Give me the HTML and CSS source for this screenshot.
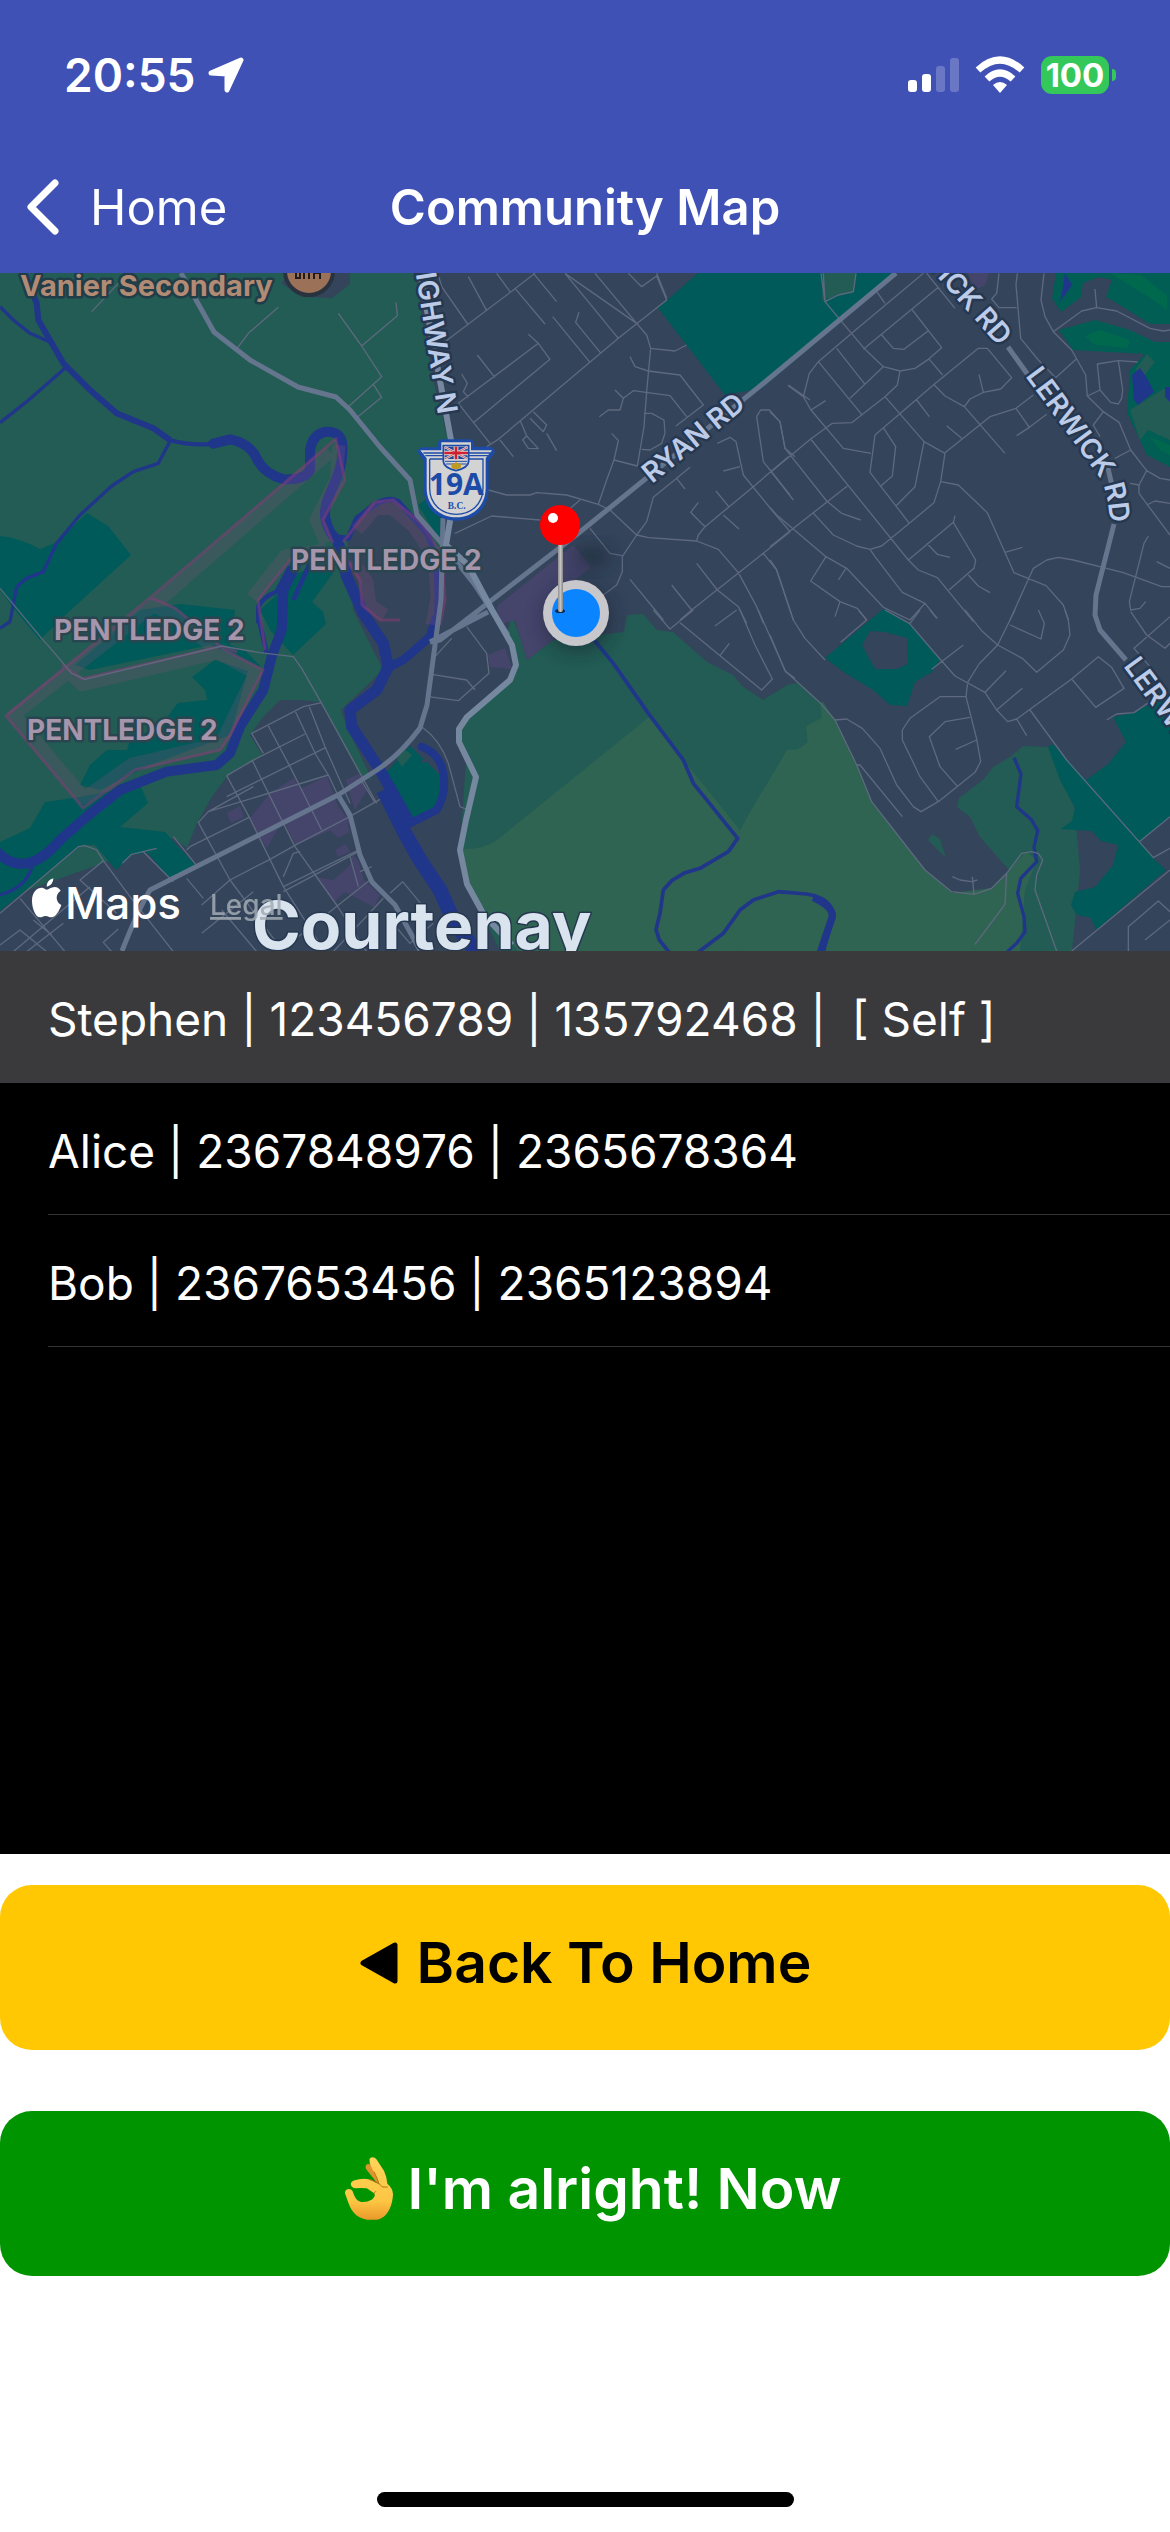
FILE: index.html
```html
<!DOCTYPE html>
<html lang="en">
<head>
<meta charset="utf-8">
<meta name="viewport" content="width=device-width, initial-scale=1">
<title>Community Map</title>
<link rel="stylesheet" href="styles.css">
</head>
<body>
<header class="header">
  <div class="status">
    <div class="status-group">
      <span class="time">20:55</span>
      <svg class="arrow" viewBox="0 0 36 36" aria-hidden="true"><path d="M33 3 L19 33 L19 17 L3 16 Z" fill="#fff" stroke="#fff" stroke-width="5" stroke-linejoin="round"/></svg>
    </div>
    <div class="status-group">
      <svg class="signal" viewBox="0 0 51 36" aria-hidden="true"><g fill="#fff"><rect x="0" y="23" width="9" height="12" rx="3"/><rect x="14" y="17" width="9" height="18" rx="3"/><g opacity=".22"><rect x="28" y="9" width="9" height="26" rx="3"/><rect x="42" y="1" width="9" height="34" rx="3"/></g></g></svg>
      <svg class="wifi" viewBox="0 0 50 38" aria-hidden="true"><g fill="none" stroke="#fff" stroke-width="7"><path d="M3 14 Q25 -6 47 14"/><path d="M12 23 Q25 11 38 23"/></g><path d="M18 29 Q25 23 32 29 L25 37 Z" fill="#fff"/></svg>
      <div class="battery-wrap"><span class="battery">100</span><span class="battery-tip"></span></div>
    </div>
  </div>
  <nav class="nav">
    <a class="back" href="#home"><svg class="chevron" viewBox="0 0 34 60" aria-hidden="true"><path d="M29 6 L5 30 L29 54" fill="none" stroke="#fff" stroke-width="7" stroke-linecap="round" stroke-linejoin="round"/></svg>Home</a>
    <h1 class="title">Community Map</h1>
  </nav>
</header>

<main class="content">
<svg class="map" viewBox="0 273 1170 678" role="img" aria-label="Map of Courtenay">
  <defs>
    <path id="hw" d="M391 120 L420 300 L438 415"/>
    <path id="ryan" d="M652 484 L757 398"/>
    <path id="ler1" d="M880 212 L999 347"/>
    <path id="ler2" d="M1025 376 L1098 475 Q1109 490 1111 535"/>
    <path id="ler3" d="M1123 666 L1210 785"/>
    <filter id="soft" x="-50%" y="-50%" width="200%" height="200%"><feGaussianBlur stdDeviation="9"/></filter>
    <linearGradient id="stick"><stop offset="0" stop-color="#8e8e8e"/><stop offset=".5" stop-color="#c4c4c4"/><stop offset="1" stop-color="#858585"/></linearGradient>
  </defs>
  <rect y="273" width="1170" height="678" fill="#34445b"/>

  <!-- open land -->
  <path class="land" d="M0 273H415L424 330 433 380 448 440 445 480 423 490 450 545 430 560 353 610 383 670 341 710 347 727 372 780 360 775 321 702 300 700 280 700 263 717 250 735 262 755 230 773 213 795 197 823 187 848 173 838 0 900Z"/>
  <path class="land" d="M553 640L624 632 627 615 643 614 657 630 673 632 690 647 707 662 733 675 743 687 763 700 787 685 797 683 820 703 835 720 857 765 872 802 925 870 952 893 974 894 992 888 1009 870 980 837 970 817 957 807 959 798 983 780 993 767 1010 757 1023 746 1048 747 1072 780 1080 870 1072 951H500L470 890 460 850 466 760 458 728 463 718 512 680 516 665 508 630 512 615 521 640 527 660Z"/>
  <path class="meadow" d="M463 849Q485 849 497 840L649 717 665 735 740 830 752 815 787 750 806 705 823 702 835 720 857 765 872 802 925 870 952 893 974 894 992 888 1009 870 1026 852 1037 860 1025 890 1020 951H518L470 890Z"/>
  <path class="land" d="M740 830Q760 810 785 750L808 749 806 726 822 718 820 703 790 684 763 700 710 665 649 717Z"/>
  <path class="meadow" d="M740 830 738 951H1010L1010 870 992 888 952 893 925 870 872 802 835 720 822 705V722L806 727 809 741 797 750H787L750 812Z"/>
  <path class="land" d="M928 840 932 834 940 839 946 858Z"/>

  <!-- woodland -->
  <path class="wood" d="M0 536Q20 538 40 549L55 543 87 513 108 526 131 555 60 620 40 640 15 610 0 590ZM281 591Q300 560 333 573L312 602 323 612 326 624 293 655 270 630 260 610ZM140 610 75 665 90 670 210 645 262 668 245 650 230 645 235 610 180 604ZM80 785 90 765 107 750 127 750 130 740 160 726 178 703 207 700 205 690 192 677 215 660 248 671 230 735 150 765 100 790ZM0 842 30 828 45 802 80 797 140 785 148 803 120 827 165 832 197 867 172 882 148 853 132 855 116 870 95 845 82 845 0 911ZM382 777 410 746 428 763 440 775V805L412 822Z"/>
  <path class="wood" d="M658 308 698 273H895L833 328 762 388 725 395ZM418 505 425 500 444 520 440 540ZM825 658 883 609 908 622 940 660 932 672 915 682 907 706 890 705 873 690 845 673ZM1048 747 1053 744 1086 780 1139 840 1155 860 1166 870 1096 930 1091 918 1077 915 1071 905 1075 892 1095 887 1113 865 1118 845 1101 841 1092 831 1061 829 1072 821 1075 808 1060 780ZM1113 717 1133 713 1150 704 1170 695V817L1139 842 1086 780 1108 764 1126 742Z"/>
  <path class="fairway" d="M1056 273H1170V324L1150 324 1120 305 1106 297 1112 280 1099 277 1083 283 1081 297 1061 312 1052 298ZM1059 330 1095 320 1130 330 1155 342 1170 342V467L1147 455 1127 413 1130 370 1145 354 1073 350Z"/>
  <path fill="#00684d" d="M1110 273 1150 298 1167 310V295L1140 275ZM1085 336 1100 330 1130 340 1128 348 1095 345ZM1150 437 1160 450 1170 455V445Z"/>
  <path class="land" d="M822 301 823 273H856L853 293 838 295ZM1130 410 1165 388H1170V440L1148 430 1140 440ZM1147 354 1155 362 1145 375 1135 370ZM397 759 403 748 412 755 402 767Z"/>
  <path fill="#34445b" d="M862 645 870 631 885 632 907 638 908 664 897 669H875ZM347 535 353 520 372 502 393 500 420 523 440 557V620L423 643 390 670 385 670 385 650 353 610ZM421 762 426 755 432 758 424 763ZM281 283 302 297 332 298 350 284V273H290Z"/>
  <path class="shops" d="M497 606 573 545 591 567 575 580 580 610 553 640 527 660 515 620 497 625ZM488 655 505 648 512 669 490 667ZM270 793 294 778 300 789 327 776 338 806 350 822 296 845 283 820 267 848 258 835 250 818ZM346 780 360 773 367 790 355 810 350 795ZM227 813 240 806 244 817 231 823ZM330 830 347 822 350 832 338 838ZM335 850 346 844 350 852 338 857ZM315 877 333 880 350 865 352 855 358 860 364 880 380 895 374 907 345 892 334 902ZM968 273H989L985 285 975 290Z"/>

  <!-- rivers and creeks -->
  <g class="water" transform="translate(0 270) scale(.33333)">
    <path stroke-width="18" d="M70 0 110 100 115 150 190 280 270 360 350 430 460 475 510 510"/>
    <path stroke-width="13" d="M510 510Q560 525 620 523L690 510"/>
    <path stroke-width="30" stroke-linecap="round" d="M640 521 690 508Q750 520 770 565T850 628Q915 630 930 600V540Q940 485 985 485T1027 540C1030 620 970 680 975 740Q985 790 1010 808"/>
    <path stroke-width="16" d="M1000 800 1045 805 1070 745 1130 700Q1170 680 1195 695L1280 790Q1320 860 1310 1050"/>
    <path stroke-width="34" d="M1010 800 1040 920 1090 1030 1150 1120 1165 1190 1130 1260 1050 1320 1055 1370 1140 1500 1230 1660"/>
    <path stroke-width="26" d="M1150 1200 1210 1170 1290 1100 1310 1040"/>
    <path stroke-width="14" d="M880 990 930 880 990 850M775 1060V1010Q790 980 830 965L870 890M775 1040 800 1150"/>
    <path stroke-width="30" d="M890 880 850 960 845 1080 815 1160 790 1260 720 1370 690 1450 650 1485 500 1505 360 1560 260 1640 180 1710Q130 1770 80 1780T-20 1735"/>
    <path stroke-width="10" d="M0 110 40 150 90 190 155 218M200 290 80 395 0 458M512 510 475 580 400 605 335 648 240 735 170 820 130 905 80 925 50 950 30 1055 0 1075M100 1770Q90 1850 0 1875"/>
  </g>
  <g class="water" transform="translate(390 610) scale(.33333)">
    <path stroke-width="44" d="M-20 540 50 680 90 750 150 840 190 930 260 1030"/>
    <path stroke-width="24" stroke-linecap="round" d="M95 410Q150 430 160 490T140 600L50 645"/>
    <path stroke-width="11" d="M600 75 670 160 775 310 880 450 910 520 1043 685 1015 725 930 775 885 788 845 812 820 840 810 910 798 958 808 990 840 1030M920 1030 1000 970 1050 900 1090 870 1165 845 1250 852Q1330 865 1328 920L1300 1025"/>
  </g>
  <g class="water" transform="translate(770 610) scale(.33333)">
    <path stroke-width="22" d="M130 862Q190 890 187 920L150 1030"/>
    <path stroke-width="10" d="M732 443 753 492 740 590 785 630 803 662 792 712 800 755 752 805 743 850 762 920 765 965 740 1000 712 1025"/>
  </g>
  <path fill="#20368a" d="M1065 273 1072 285 1060 302 1063 287ZM1132 375 1140 368 1147 378 1154 392 1138 405 1134 400ZM1165 387H1170V402L1165 397Z"/>

  <!-- reserve boundaries -->
  <g class="reserve-band">
    <path d="M330 452 153 606 14 715 84 798 132 764 218 744 225 735 255 673 222 655 172 614 148 604M66 670 82 685 222 652M339 445 336 480 316 520 326 543M326 550 285 556 252 598"/>
    <path d="M357 530 375 509 392 508 414 527 434 557 437 598 432 625M352 560 367 582 370 605 385 615"/>
  </g>
  <g class="reserve">
    <path d="M337 438 150 598 6 716 83 808 135 770 220 750 230 735 263 670 225 650 175 608 149 597M62 665 82 679 222 646 237 652"/>
    <path d="M336 440 345 480 323 520 333 543M333 553 290 560 258 600 265 650M343 542 375 502 393 500 420 522 442 555 445 600 440 625M343 553 360 580 362 605 380 620 400 620"/>
  </g>

  <!-- local streets -->
  <g class="street" transform="translate(0 270) scale(.33333)">
    <path d="M275 125 360 35M835 112 745 190 710 237M1015 130 1085 228 1192 137 1188 97M1085 228 1145 320 1045 410M1120 343 1145 382 1070 443M0 955 125 1105 160 1145 215 1210 255 1228 665 1128 780 1148 880 1160 905 1195 965 1300 1130 1600"/>
  </g>
  <g class="street" transform="translate(390 270) scale(.33333)">
    <path d="M145 15 155 50 235 165M165 215 370 60 435 10M235 20 290 122M320 10 360 65M375 55 465 162M430 10 500 95M525 10 740 160 770 195 782 235 770 365 762 470 742 588 672 570 685 512 665 490M525 10 685 205M488 140 600 277M567 127 557 157 633 250M615 10 740 160M715 10 755 50 800 18 830 90 685 205 325 508 290 530M800 10 830 85M780 235 855 243 890 225M415 193 445 220 480 268 250 458M445 220 205 400 300 520M262 255 315 323M215 312 232 340 220 365 235 382M330 510 370 560M390 450 410 498 398 510 415 535 445 536 410 498M430 425 470 465 460 485 420 445M470 490 500 542M720 260 735 290 775 303 870 315 940 405 858 468M675 360 700 385 730 362 840 377 890 440M700 385 690 420 655 420 628 440M762 430 785 430 822 450 825 490 815 520 780 540 755 538M672 570 650 630 625 703M295 660 350 675 420 675 440 668 530 675 625 703 660 720 740 795 775 803 920 813 985 838 1045 908M570 690 500 750M450 750 305 738 195 790M900 592 860 625 790 682 770 755 740 795 697 860 697 905 680 945 640 975M600 775 660 850 697 857M860 625 885 657M1195 345 1260 390M1195 560 1090 650 945 770 925 795 920 813M978 663 1018 712M925 697 902 727 945 770M1000 735 1047 777M982 520 1020 502 1038 515 1060 615 1145 720 1200 785M1000 603 1050 590M1120 575 1100 440 1112 420 1138 420 1170 455 1185 535 1215 560M1120 575 1200 675M920 880 982 960 1045 1010 1070 1060M845 945 905 1020 870 1050M720 928 820 1050M905 1020 1120 850 1200 785M1120 850 1160 900 1200 1020M1045 908 1100 1010 1120 1060"/>
  </g>
  <g class="street" transform="translate(770 270) scale(.33333)">
    <path d="M153 10 165 95 215 155 285 238 340 290 390 303 435 295 475 268 515 233 427 120M160 10 165 95 205 75 250 65 258 10M320 65 345 100M460 10 245 190 145 275 118 310 100 380 123 420 220 535 303 550M505 52 280 238M335 195 370 235 402 238 475 182M470 10 555 115M200 235 285 343M340 290 240 385M145 275 275 433M390 303 382 345 345 380 245 458 187 460 122 507 0 608M478 268 518 315M55 347 100 380M123 420 167 392M345 380 462 515 525 550 512 635 492 698 418 760 335 828 300 838 260 828 190 795 128 727M440 390 478 440M625 235 490 345 315 495 300 607 418 760M340 473 377 530 367 618 330 650M462 515 435 650 378 708M625 235H652L725 323 692 357 640 367 600 387 583 410 525 378 493 345M627 313 640 367M583 410 705 550M790 375 738 415 660 440 525 548M738 415 778 472 830 433M740 497 778 472M530 467 575 505M0 425 30 455 45 535 170 693 215 730 272 750M0 600 70 690M122 507 415 870 445 900 502 923 610 1055M0 830 232 648M0 712 20 735 168 860 230 895 340 1012 420 1050M168 860 122 933 210 995 262 1015 290 1050M228 895 205 930M210 995 195 1040M300 838 315 860 397 967 465 1000 502 1045M465 1000 420 1050M415 870 550 757 555 737M550 757 617 870 612 895 537 960M470 820 502 853 540 862M595 915 625 948 660 968M512 635 565 645 652 728 732 908 828 947 880 1005 895 1050M705 847 757 832M720 1050 790 895 830 870 865 862 910 870 1060 908 1175 950H1200M687 10 680 70 665 87 687 113H740M742 10 738 45 752 205 805 270 857 323 918 268M822 10 813 90 825 140 850 185 905 240 947 315 952 378 1000 425 1048 458 1082 540 1130 602 1170 625 1200 630M850 185 935 123 980 113 1040 123 1140 175 1180 183 1200 180M980 113 975 57M952 378 990 360 982 282 1045 272 1103 276M990 360 1022 397 1045 402 1055 385 1058 360 1045 272M1000 425 970 465 990 500M1082 540 1035 565M1130 602 1107 645V670L1200 795M1107 645 1080 640M1130 705 1155 693 1200 700M1135 798 1122 820 1078 995 1082 1020 1110 1015 1127 995M1160 875 1200 895M0 870 18 895 70 1050"/>
  </g>
  <g class="street" transform="translate(0 610) scale(.33333)">
    <path d="M965 278 910 290 755 370 790 430M885 302 948 435 985 495 1045 622M928 290 975 410 1050 580M805 348 870 470 965 660M757 452 850 640 885 710 1010 885 1100 1025M680 497 747 620 850 830 975 1025M915 372 757 452 680 497M978 412 680 560M985 495 625 605 595 637 690 810 850 1025M1083 510 1125 578M1140 568 1045 622 890 703 810 748 690 810 605 885M760 530 625 605M560 720 570 710 747 622M520 680 595 773M850 800 880 730 900 725M850 830 1080 718M850 845 1075 725M1050 740 1075 830M1110 810 870 1000M1150 865 1000 1025M0 910 235 710 255 707 290 720 310 752 390 860 520 1025M310 752 240 810 350 910M60 865 195 1025M430 725 520 815M367 760 395 733 470 715M560 805 610 865M665 900 770 1025M40 1025 270 830M190 940 80 1025M355 957 310 997 335 1025M605 970 760 845M100 930 155 975M1080 785 1115 770M140 1025 60 960 0 1005"/>
  </g>
  <g class="street" transform="translate(390 610) scale(.33333)">
    <path d="M230 50 290 130 297 190 205 272 115 260M125 193 230 210 255 240M135 140 185 85M97 352Q150 390 175 460L210 590 235 600M0 850 38 815 100 890M0 930 60 1000 130 940M790 0 840 57 910 0M870 38 1115 240 1147 207 1095 105 1050 0M975 48 1040 0M1018 100 990 137M1105 0 1187 185 1215 205"/>
  </g>
  <g class="street" transform="translate(770 610) scale(.33333)">
    <path d="M60 0 70 30 105 85 165 150M0 75 45 182 150 278 195 330 260 465 305 575 465 780 545 845 612 853 665 835 710 790 705 883 615 1003M265 0 290 30 212 97M420 40 450 0M345 0 418 40 515 153 555 198 645 247 680 300 713 335 740 327 905 207 985 140 1025 172 1062 235 977 292 905 207M485 178 580 105M480 0 500 25M585 0 635 62 683 105 757 145 800 187 880 120 900 75 895 30 885 0M735 0 683 105 627 162 593 217 588 260 620 387 632 455 615 487 505 575 453 605 430 590 380 525 330 415 277 355 230 327 195 330M805 0 823 40 813 87 720 45M588 260H510L420 325 397 360V390L450 500 505 575M600 322 525 335 478 380 510 470 563 530M557 418 620 390M708 182 645 247M757 235 680 300M740 327 770 377M780 300 890 450 1150 743 1200 715M260 465 270 465 397 620M710 790 755 730 785 725 805 730 818 750 800 795 795 840 860 1023M547 800 570 810 605 815 622 810M607 800 612 853M905 1023 1200 780M1108 695 1200 620M1075 1023V950L1165 873 1200 905M1125 990 1200 930M1010 330 1040 312 1092 308 1140 275M1082 5 1130 75 1185 115 1200 100M1200 20 1092 115 1155 187"/>
  </g>

  <!-- main roads -->
  <g class="main-road">
    <path d="M181 273 214 332 250 360 298 387 336 397 350 410 380 447 410 480 417 515 445 547 475 585 508 635"/>
    <path d="M896 273 765 382 575 536 440 640 430 642M488 612 430 642M443 518 441 600 433 660 427 705 420 728Q400 755 377 770L338 795 150 890Q138 910 122 951M338 795 350 815 360 855 372 882 395 905 420 950"/>
    <path d="M1008 347 1046 400M1105 455 1113 490M1114 524 1096 595 1095 615 1100 630 1126 660"/>
  </g>
  <path class="highway" d="M420 273 438 370 451 440V515L446 545 468 565 492 610 512 645 516 665 510 680 467 717 459 729V742L476 777 466 820 460 850 467 884 484 915 512 945"/>

  <!-- place and road names -->
  <g class="names">
    <text class="road-name" text-anchor="end"><textPath href="#hw" startOffset="100%">HIGHWAY N</textPath></text>
    <text class="road-name"><textPath href="#ryan">RYAN RD</textPath></text>
    <text class="road-name" text-anchor="end"><textPath href="#ler1" startOffset="100%">LERWICK RD</textPath></text>
    <text class="road-name"><textPath href="#ler2">LERWICK RD</textPath></text>
    <text class="road-name"><textPath href="#ler3">LERWICK</textPath></text>
    <text class="reserve-name" x="291" y="570">PENTLEDGE 2</text>
    <text class="reserve-name" x="54" y="640">PENTLEDGE 2</text>
    <text class="reserve-name" x="27" y="740">PENTLEDGE 2</text>
    <text class="school-name" x="20" y="296">Vanier Secondary</text>
    <text class="town-name" x="252" y="949">Courtenay</text>
  </g>
  <circle cx="309" cy="271" r="24" fill="#9b7157" stroke="#29333f" stroke-width="4"/>
  <path d="M296 273V278H300V273M304 279V272H309V279M314 279V273H320V279" fill="none" stroke="#211c1a" stroke-width="2"/>

  <!-- route 19A shield -->
  <g transform="translate(390 270) scale(.33333)">
    <path d="M148 512Q150 508 156 508H240Q252 508 252 530H300Q316 535 314 548L296 573V655C296 715 255 752 199 752S101 715 101 655V573L84 548Q82 535 98 532H144V518Z" fill="#1c4ba8"/>
    <path d="M154 517H243V541H306L287 565V655C287 708 248 742 199 742S110 708 110 655V565L91 541H154Z" fill="#d3d3d3"/>
    <path d="M100 549H160M236 549H300M106 557H160M236 557H294M119 567H160M236 567H279V655C279 702 243 733 199 733S119 702 119 655V567" fill="none" stroke="#1c4ba8" stroke-width="4"/>
    <path d="M160 527H236V575Q234 594 198 602Q162 594 160 575Z" fill="#d3d3d3" stroke="#1c4ba8" stroke-width="5"/>
    <rect x="164" y="531" width="69" height="36" fill="#23489b"/>
    <path d="M164 531 233 567M233 531 164 567" stroke="#ddd" stroke-width="7"/><path d="M198 530V568M163 549H234" stroke="#ddd" stroke-width="14"/>
    <path d="M164 531 233 567M233 531 164 567" stroke="#c3202d" stroke-width="2"/><path d="M198 530V568M163 549H234" stroke="#d1202d" stroke-width="8"/>
    <path d="M165 574H232M167 582H230" stroke="#1c4ba8" stroke-width="3"/><path d="M182 578 190 583 198 575 207 583 215 578 212 594Q198 602 185 594Z" fill="#c09b24"/>
    <text class="shield-number" x="199" y="675" text-anchor="middle">19A</text>
    <text class="shield-region" x="200" y="717" text-anchor="middle">B.C.</text>
  </g>

  <!-- current position and pin -->
  <circle cx="578" cy="618" r="34" fill="#14202e" opacity=".55" filter="url(#soft)"/>
  <ellipse cx="592" cy="557" rx="20" ry="11" fill="#14202e" opacity=".5" filter="url(#soft)"/>
  <circle cx="576" cy="613" r="33" fill="#c7c7cc"/><circle cx="576" cy="613" r="24" fill="#0a84ff"/>
  <ellipse cx="560" cy="611" rx="5" ry="2" fill="#08264a"/>
  <rect x="558" y="540" width="5" height="72" rx="2" fill="url(#stick)"/>
  <circle cx="560" cy="525" r="20" fill="red"/><circle cx="553" cy="518" r="5" fill="#fff"/>

  <!-- map attribution -->
  <path transform="translate(32 881) scale(.33333)" fill="#fff" d="M44 26C50 26 57 18 68 18Q80 19 86 29Q74 37 74 51Q75 66 88 72C82 89 71 109 58 109C51 109 49 105 41 105S30 109 24 109C11 109 0 83 0 59C0 31 19 18 33 21C38 22 41 26 44 26ZM44 17Q44 -2 64 -8Q64 12 44 17Z"/>
  <text class="maps-word" x="65" y="919">Maps</text>
  <a href="#legal"><text class="legal" x="210" y="915">Legal</text></a>
</svg>

<ul class="people">
  <li class="person selected">Stephen | 123456789 | 135792468 |&nbsp; [ Self ]</li>
  <li class="person">Alice | 2367848976 | 2365678364</li>
  <li class="person">Bob | 2367653456 | 2365123894</li>
</ul>
</main>

<footer class="actions">
  <button class="action home" type="button"><svg class="triangle" viewBox="0 0 40 44" aria-hidden="true"><path d="M36 4V40L4 22Z" fill="#000" stroke="#000" stroke-width="5" stroke-linejoin="round"/></svg>Back To Home</button>
  <button class="action alright" type="button"><svg class="hand" viewBox="43 78 154 196" aria-hidden="true">
    <defs><linearGradient id="skin" x1="0" y1="0" x2="0" y2="1"><stop offset="0" stop-color="#ffd35a"/><stop offset=".7" stop-color="#fdc643"/><stop offset="1" stop-color="#e9982a"/></linearGradient></defs>
    <path d="M110 105Q105 112 113 122L147 165 158 155 124 106Q116 99 110 105Z" fill="#dd942b"/>
    <path d="M120 88C123 78 137 80 142 89L164 123Q172 140 174 162Q190 176 191 193C190 222 177 267 140 270C92 275 69 254 57 221L46 190C45 176 63 173 69 184C74 198 79 211 92 216Q110 219 128 209Q140 199 134 190L112 175Q91 174 77 175C61 173 59 157 73 152Q99 143 120 149L150 164Q145 144 133 126L121 101Z" fill="url(#skin)"/>
    <path d="M120 149Q148 156 158 171L174 172M134 190Q137 188 139 185M134 126Q143 144 148 160" fill="none" stroke="#b8731c" stroke-width="3" stroke-linecap="round"/>
  </svg>I'm alright! Now</button>
  <div class="home-indicator"></div>
</footer>
</body>
</html>
```
FILE: styles.css
```css
* { box-sizing: border-box; }
body { margin: 0; min-height: 100vh; display: flex; flex-direction: column; background: #fff; font-family: Inter, "Liberation Sans", sans-serif; }

.header { background: #3f51b5; color: #fff; }
.status { display: flex; justify-content: space-between; align-items: center; height: 141px; padding: 9px 54px 0 64px; }
.status-group { display: flex; align-items: center; gap: 16px; }
.time { font-size: 46px; font-weight: 600; line-height: 56px; }
.arrow { width: 36px; height: 36px; margin-left: -4px; }
.signal { width: 51px; height: 36px; }
.wifi { width: 50px; height: 38px; }
.battery-wrap { display: flex; align-items: center; gap: 3px; }
.battery { width: 68px; border-radius: 11px; background: #34c759; font-size: 33px; font-weight: 700; line-height: 38px; text-align: center; }
.battery-tip { width: 4px; height: 12px; border-radius: 0 4px 4px 0; background: #34c759; }
.nav { display: grid; grid-template-columns: 1fr auto 1fr; align-items: center; height: 132px; padding: 0 26px; }
.back { display: flex; align-items: center; gap: 30px; color: #fff; font-size: 49px; text-decoration: none; }
.chevron { width: 34px; height: 60px; }
.title { margin: 0; font-size: 49px; font-weight: 600; }

.content { flex: 1; background: #000; }
.map { display: block; width: 100%; height: auto; }
.land { fill: #225c54; }
.meadow { fill: #2f6352; }
.wood { fill: #005a5a; }
.fairway { fill: #005e54; }
.shops { fill: #45446b; }
.water { fill: none; stroke: #20368a; stroke-linejoin: round; }
.reserve { fill: none; stroke: #8c3c78; stroke-opacity: .5; stroke-width: 3px; stroke-linejoin: round; }
.reserve-band { fill: none; stroke: #8c5078; stroke-opacity: .24; stroke-width: 13px; stroke-linejoin: round; }
.street { fill: none; stroke: #5d697e; stroke-width: 4px; stroke-linejoin: round; }
.main-road { fill: none; stroke: #65758e; stroke-width: 5px; stroke-linejoin: round; }
.highway { fill: none; stroke: #7688a0; stroke-width: 6px; stroke-linejoin: round; }
.names { paint-order: stroke; stroke: #263850; stroke-width: 5px; stroke-linejoin: round; font-weight: 600; }
.road-name { fill: #bccbe8; font-size: 28px; }
.reserve-name { fill: #a795ab; stroke: #294650; font-size: 28px; font-weight: 700; }
.school-name { fill: #b38b75; stroke: #203d48; font-size: 29px; font-weight: 700; }
.town-name { fill: #dae4ef; stroke-width: 3px; font-size: 66px; font-weight: 700; }
.shield-number { fill: #1c4ba8; font: 700 90px "Liberation Sans Narrow", "Open Sans", sans-serif; }
.shield-region { fill: #1c4ba8; font: 700 28px "Liberation Serif", serif; }
.maps-word { fill: #fff; font-size: 44px; font-weight: 500; }
.legal { fill: #a3acb5; font-size: 28px; font-weight: 500; text-decoration: underline; opacity: .85; }

.people { margin: 0; padding: 0; list-style: none; }
.person { height: 132px; margin-left: 48px; border-bottom: 1px solid #333335; color: #fff; font-size: 46px; line-height: 136px; white-space: nowrap; }
.person.selected { margin-left: 0; padding-left: 48px; border: 0; background: #3a3a3c; }

.actions { display: flex; flex-direction: column; gap: 61px; padding: 31px 0 25px; }
.action { display: flex; align-items: center; justify-content: center; height: 165px; padding: 0 0 10px; border: 0; border-radius: 32px; font: 600 57px/1 Inter, "Liberation Sans", sans-serif; }
.home { gap: 18px; background: #ffc803; color: #000; }
.alright { gap: 12px; padding-left: 16px; background: #009400; color: #fff; }
.triangle { width: 40px; height: 44px; }
.hand { width: 51px; height: 65px; }
.home-indicator { width: 417px; height: 15px; margin: 155px auto 0; border-radius: 8px; background: #000; }
```
